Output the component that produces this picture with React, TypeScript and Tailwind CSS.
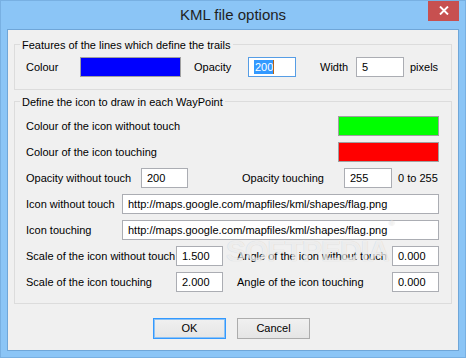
import React from "react";

function Field({ value, w }: { value: string; w: string }) {
  return (
    <div className={`${w} h-[20px] shrink-0 border border-[#abadb3] bg-white pl-[5px] flex items-center leading-[14px]`}>
      {value}
    </div>
  );
}

function Swatch({ color }: { color: string }) {
  return <div className={`w-[101px] h-[20px] shrink-0 border border-[#a0a0a0] ${color}`} />;
}

export default function App() {
  return (
    <div className="relative w-[466px] h-[358px] bg-[#8bc5f6] border border-[#78b0e2] px-[6px] pb-[6px] flex flex-col font-['Liberation_Sans',Arial,sans-serif] text-[11px] text-black select-none overflow-hidden">
      {/* title bar */}
      <div className="h-[28px] shrink-0 flex items-center justify-center text-[15px] text-[#1f1f1f]">
        KML file options
      </div>
      <div className="absolute top-[-1px] right-[6px] w-[31px] h-[21px] bg-[#c75050] flex items-center justify-center">
        <svg width="10" height="9" viewBox="0 0 10 9">
          <path d="M1 0.5 L9 8.5 M9 0.5 L1 8.5" stroke="#ffffff" strokeWidth="1.9" />
        </svg>
      </div>

      {/* client area */}
      <div className="relative flex-1 border border-[#6fa6d8] bg-[#f0f0f0] px-[6px] pt-[14px] flex flex-col">
        {/* group 1 */}
        <div className="h-[46px] shrink-0 border border-[#dcdcdc] flex flex-col">
          <div className="-mt-[8px] ml-[5px] px-[2px] bg-[#f0f0f0] w-fit leading-[16px]">
            Features of the lines which define the trails
          </div>
          <div className="mt-[4px] h-[20px] pl-[11px] flex items-center">
            <span className="w-[54px] shrink-0">Colour</span>
            <Swatch color="bg-[#0000ff]" />
            <span className="ml-[13px] w-[54px] shrink-0">Opacity</span>
            <div className="w-[48px] h-[20px] shrink-0 border border-[#569de5] bg-white pl-[5px] flex items-center">
              <span className="bg-[#3399ff] text-white leading-[14px] h-[14px] flex items-center pl-[1px]">200</span>
              <span className="w-[1px] h-[14px] bg-[#b8620f]" />
            </div>
            <span className="ml-[24px] w-[36px] shrink-0">Width</span>
            <Field value="5" w="w-[48px]" />
            <span className="ml-[6px]">pixels</span>
          </div>
        </div>

        {/* group 2 */}
        <div className="mt-[11px] h-[203px] shrink-0 border border-[#dcdcdc] flex flex-col">
          <div className="-mt-[8px] ml-[5px] px-[2px] bg-[#f0f0f0] w-fit leading-[16px]">
            Define the icon to draw in each WayPoint
          </div>
          <div className="mt-[6px] pl-[11px] flex flex-col gap-[6px]">
            <div className="h-[20px] flex items-center">
              <span className="w-[312px] shrink-0">Colour of the icon without touch</span>
              <Swatch color="bg-[#00ff00]" />
            </div>
            <div className="h-[20px] flex items-center">
              <span className="w-[312px] shrink-0">Colour of the icon touching</span>
              <Swatch color="bg-[#ff0000]" />
            </div>
            <div className="h-[20px] flex items-center">
              <span className="w-[115px] shrink-0">Opacity without touch</span>
              <Field value="200" w="w-[47px]" />
              <span className="ml-[54px] w-[102px] shrink-0">Opacity touching</span>
              <Field value="255" w="w-[48px]" />
              <span className="ml-[6px]">0 to 255</span>
            </div>
            <div className="h-[20px] flex items-center">
              <span className="w-[96px] shrink-0">Icon without touch</span>
              <Field value="http://maps.google.com/mapfiles/kml/shapes/flag.png" w="w-[317px]" />
            </div>
            <div className="h-[20px] flex items-center">
              <span className="w-[96px] shrink-0">Icon touching</span>
              <Field value="http://maps.google.com/mapfiles/kml/shapes/flag.png" w="w-[317px]" />
            </div>
            <div className="h-[20px] flex items-center">
              <span className="w-[150px] shrink-0 whitespace-nowrap">Scale of the icon without touch</span>
              <Field value="1.500" w="w-[47px]" />
              <span className="ml-[14px] w-[155px] shrink-0 whitespace-nowrap">Angle of the icon without touch</span>
              <Field value="0.000" w="w-[47px]" />
            </div>
            <div className="h-[20px] flex items-center">
              <span className="w-[150px] shrink-0">Scale of the icon touching</span>
              <Field value="2.000" w="w-[47px]" />
              <span className="ml-[14px] w-[155px] shrink-0">Angle of the icon touching</span>
              <Field value="0.000" w="w-[47px]" />
            </div>
          </div>
        </div>

        {/* buttons */}
        <div className="mt-[14px] pl-[139px] flex gap-[11px]">
          <div className="w-[73px] h-[21px] border border-[#3399ff] shadow-[inset_0_0_0_1px_#8cc2f5] bg-gradient-to-b from-[#f0f0f0] to-[#e5e5e5] flex items-center justify-center">
            OK
          </div>
          <div className="w-[73px] h-[21px] border border-[#acacac] bg-gradient-to-b from-[#f0f0f0] to-[#e5e5e5] flex items-center justify-center">
            Cancel
          </div>
        </div>

        {/* watermark */}
        <span className="absolute left-[218px] top-[198px] text-[30px] font-bold tracking-[-1px] text-white/70 [text-shadow:0_0_1px_rgba(0,0,0,0.18)] pointer-events-none">
          SOFTPEDIA<sup className="text-[8px] align-top">®</sup>
        </span>
      </div>
    </div>
  );
}
